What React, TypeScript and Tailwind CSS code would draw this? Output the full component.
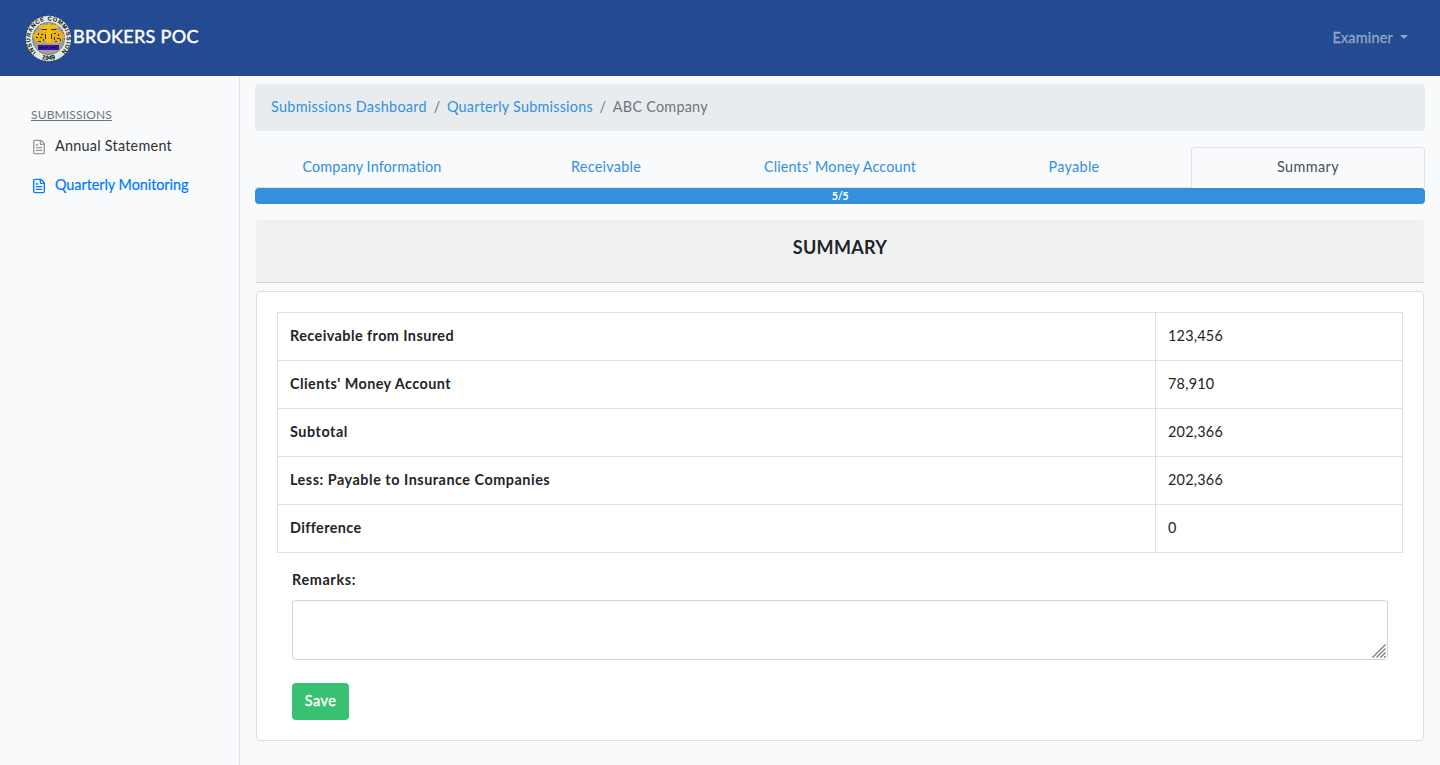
import { FileText } from "lucide-react";

const tabs = [
  { label: "Company Information", tracking: "tracking-[0.1px]" },
  { label: "Receivable", tracking: "tracking-[0.26px]" },
  { label: "Clients' Money Account", tracking: "tracking-[0.12px]" },
  { label: "Payable", tracking: "tracking-[0.3px]" },
];

const rows = [
  { label: "Receivable from Insured", value: "123,456", tracking: "tracking-[0.43px]" },
  { label: "Clients' Money Account", value: "78,910", tracking: "tracking-[0.44px]" },
  { label: "Subtotal", value: "202,366", tracking: "tracking-[0.55px]" },
  { label: "Less: Payable to Insurance Companies", value: "202,366", tracking: "tracking-[0.52px]" },
  { label: "Difference", value: "0", tracking: "tracking-[0.37px]" },
];

function Seal() {
  return (
    <svg className="size-12 shrink-0" viewBox="0 0 48 48" aria-hidden="true">
      <defs>
        <path id="seal-top" d="M12.2 38.1A18.2 18.2 0 1 1 36.8 38.1" />
        <path id="seal-bottom" d="M14 43.3A21.4 21.4 0 0 0 35 43.3" />
      </defs>
      <circle cx="24.5" cy="24.5" r="22.9" fill="#dfe8e2" stroke="#16202c" strokeWidth="0.8" strokeDasharray="2 1.2" />
      <circle cx="24.5" cy="24.5" r="16" fill="#98a29b" stroke="#30383a" strokeWidth="0.7" strokeDasharray="2 1" />
      <g fontFamily="Liberation Sans, sans-serif" fontWeight="700" fill="#05080c">
        <text fontSize="5.8">
          <textPath href="#seal-top" textLength="86" lengthAdjust="spacing">INSURANCE COMMISSION</textPath>
        </text>
        <text fontSize="6.4" textAnchor="middle">
          <textPath href="#seal-bottom" startOffset="50%">1949</textPath>
        </text>
      </g>
      <g shapeRendering="crispEdges">
        <path d="M24 9h2v2h8v3h-3v2h4v2h-7v11h-6V18h-7v-2h3v-2h-3v-3h9z" fill="#f8bd16" />
        <path d="M13 16h7v3h2v8h-2v2h-7v-2h-2v-3h-2v-4h2v-2h2zM29 16h7v2h2v2h2v4h-2v3h-2v2h-7v-2h-2v-8h2z" fill="#edb013" />
        <path d="M14 19h1v2h-1zM17 20h2v1h-2zM12 23h2v1h-2zM16 23h2v1h-2zM19 25h1v2h-1zM14 27h3v1h-3zM30 19h2v1h-2zM34 20h1v2h-1zM30 23h1v3h-1zM33 24h3v1h-3zM36 25h1v2h-1zM31 27h2v1h-2zM18 15h5v1h-5zM27 15h5v1h-5zM21 20h1v5h-1zM27 20h1v5h-1z" fill="#272a20" />
        <path d="M14 31h21v5H14z" fill="#4210a5" />
        <path d="M15 33h4v1h-4zM21 33h3v1h-3zM27 33h5v1h-5z" fill="#16103a" />
      </g>
    </svg>
  );
}

export default function App() {
  return (
    <div className="flex h-[765px] flex-col bg-[#f8fafc] font-[Lato,sans-serif] text-[14.4px] leading-[23px] text-[#212529]">
      <header className="flex h-[76px] shrink-0 items-center justify-between bg-[#244b92] pr-8 pl-6">
        <div className="flex items-center text-white">
          <Seal />
          <span className="ml-px pb-[3px] text-[18px] tracking-[0.3px] [-webkit-text-stroke:0.45px_white]">BROKERS POC</span>
        </div>
        <button className="flex items-center pb-0.5 text-[#92a5c9]">
          <span className="tracking-[0.22px] [-webkit-text-stroke:0.3px_#92a5c9]">Examiner</span>
          <svg className="ml-[7px] h-1 w-2" viewBox="0 0 8 4" fill="currentColor"><path d="M0 0h8L4 4z" /></svg>
        </button>
      </header>

      <div className="flex min-h-0 flex-1">
        <aside className="w-60 shrink-0 border-r border-[#dee2e6] pt-[27px] pl-[31px]">
          <h6 className="text-[12px] tracking-[0.15px] text-[#6c757d] underline">SUBMISSIONS</h6>
          <nav>
            <a className="mt-2 flex items-center text-[#333]">
              <FileText className="mt-0.5 mr-2 size-4 text-[#999]" strokeWidth={2} />
              <span className="tracking-[0.25px]">Annual Statement</span>
            </a>
            <a className="mt-4 flex items-center text-[#007bff]">
              <FileText className="mt-0.5 mr-2 size-4" strokeWidth={2} />
              <span className="tracking-[-0.04px] [-webkit-text-stroke:0.2px_#007bff]">Quarterly Monitoring</span>
            </a>
          </nav>
        </aside>

        <main className="flex-1 pt-2 pr-[15px] pl-[15px]">
          <div className="flex h-[47px] items-center rounded bg-[#e9ecef] px-4 pb-0.5 text-[#6c757d]">
            <a className="tracking-[0.3px] text-[#3490dc]">Submissions Dashboard</a>
            <span className="w-5 text-center">/</span>
            <a className="tracking-[0.22px] text-[#3490dc]">Quarterly Submissions</a>
            <span className="w-5 text-center">/</span>
            <span className="tracking-[0.25px]">ABC Company</span>
          </div>

          <div className="mt-4 grid h-[41px] grid-cols-5 text-center">
            {tabs.map((tab) => (
              <a key={tab.label} className={`border-b border-[#dee2e6] pt-2 text-[#3490dc] ${tab.tracking}`}>
                {tab.label}
              </a>
            ))}
            <a className="rounded-t border border-b-0 border-[#dee2e6] pt-[7px] tracking-[0.4px] text-[#495057]">Summary</a>
          </div>
          <div className="flex h-4 items-center justify-center rounded bg-[#3490dc] text-[10.8px] leading-4 font-bold tracking-[-0.3px] text-white">
            5/5
          </div>

          <div className="mx-px mt-4 h-[63px] rounded-t border-b border-[#d2d4d6] bg-[#f0f1f3] pt-4 text-center">
            <h5 className="text-[18px] tracking-[0.3px] font-bold">SUMMARY</h5>
          </div>

          <section className="mx-px mt-2 h-[450px] rounded border border-[#dfdfdf] bg-white p-5">
            <table className="h-[241px] w-full border-collapse">
              <tbody>
                {rows.map((row) => (
                  <tr key={row.label} className="h-12">
                    <th className={`w-[878px] border border-[#dee2e6] px-3 pb-0.5 text-left font-bold ${row.tracking}`}>
                      {row.label}
                    </th>
                    <td className="border border-[#dee2e6] px-3 pb-0.5 tracking-[0.23px]">{row.value}</td>
                  </tr>
                ))}
              </tbody>
            </table>
            <div className="px-[15px] pt-[15px]">
              <label htmlFor="remarks" className="block font-bold tracking-[0.64px]">Remarks:</label>
              <div className="relative mt-[9px]">
                <textarea id="remarks" className="block h-[60px] w-full resize-none rounded border border-[#ced4da] bg-white" />
                <svg
                  className="pointer-events-none absolute right-0.5 bottom-0.5 size-[14px]"
                  viewBox="0 0 14 14"
                  fill="none"
                  stroke="#777"
                  strokeWidth="1.2"
                  aria-hidden="true"
                >
                  <path d="M0.5 13.5l13-13M4.5 13.5l9-9M8.5 13.5l5-5M12 13.5l1.5-1.5" />
                </svg>
              </div>
              <button className="mt-[23px] h-[37px] w-[57px] rounded bg-[#38c172] pb-0.5 tracking-[0.5px] text-white [-webkit-text-stroke:0.4px_white]">
                Save
              </button>
            </div>
          </section>
        </main>
      </div>
    </div>
  );
}
